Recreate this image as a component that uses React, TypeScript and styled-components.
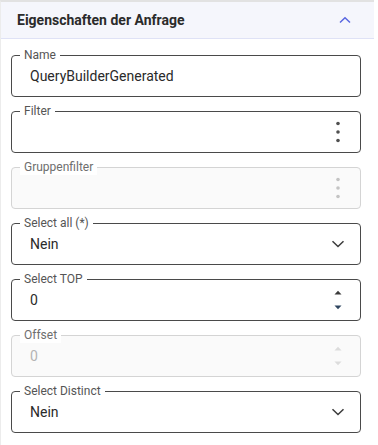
import styled, { createGlobalStyle } from 'styled-components'

const GlobalStyle = createGlobalStyle`
  html, body {
    margin: 0;
    padding: 0;
    background: #fff;
  }
  body {
    font-family: Roboto, "Liberation Sans", sans-serif;
  }
`

interface FieldDef {
  readonly label: string
  readonly value?: string
  readonly kind: 'text' | 'menu' | 'select' | 'number'
  readonly disabled?: boolean
}

const fields: readonly FieldDef[] = [
  { label: 'Name', value: 'QueryBuilderGenerated', kind: 'text' },
  { label: 'Filter', kind: 'menu' },
  { label: 'Gruppenfilter', kind: 'menu', disabled: true },
  { label: 'Select all (*)', value: 'Nein', kind: 'select' },
  { label: 'Select TOP', value: '0', kind: 'number' },
  { label: 'Offset', value: '0', kind: 'number', disabled: true },
  { label: 'Select Distinct', value: 'Nein', kind: 'select' },
]

const ChevronUp = () => (
  <svg width="14" height="8" viewBox="0 0 14 8">
    <path d="M2 6.5 L7 1.8 L12 6.5" fill="none" stroke="#5866e0" strokeWidth="1.5" />
  </svg>
)

const ChevronDown = () => (
  <svg width="14" height="8" viewBox="0 0 14 8">
    <path d="M1.5 1.2 L7 6.5 L12.5 1.2" fill="none" stroke="#3c3c3c" strokeWidth="1.5" />
  </svg>
)

const Kebab = ({ disabled }: { disabled?: boolean }) => (
  <svg width="6" height="22" viewBox="0 0 6 22">
    {[2.5, 11, 19.5].map(cy => (
      <circle key={cy} cx="3" cy={cy} r="1.8" fill={disabled ? '#c4c4c4' : '#505050'} />
    ))}
  </svg>
)

const Spinner = ({ disabled }: { disabled?: boolean }) => {
  const c = disabled ? '#dcdcdc' : '#3a3a3a'
  return (
    <SpinWrap>
      <svg width="8" height="5" viewBox="0 0 8 5">
        <path d="M0.5 4.5 L4 0.8 L7.5 4.5 Z" fill={c} />
      </svg>
      <svg width="8" height="5" viewBox="0 0 8 5">
        <path d="M0.5 0.5 L4 4.2 L7.5 0.5 Z" fill={disabled ? c : '#2f4660'} />
      </svg>
    </SpinWrap>
  )
}

const Field = ({ field }: { field: FieldDef }) => (
  <FieldBox $disabled={field.disabled}>
    <Label $disabled={field.disabled}>{field.label}</Label>
    <Value $disabled={field.disabled}>{field.value ?? ''}</Value>
    <Adornment>
      {field.kind === 'menu' && <Kebab disabled={field.disabled} />}
      {field.kind === 'select' && <ChevronDown />}
      {field.kind === 'number' && <Spinner disabled={field.disabled} />}
    </Adornment>
  </FieldBox>
)

export default function App() {
  return (
    <>
      <GlobalStyle />
      <Panel>
        <Header>
          <Title>Eigenschaften der Anfrage</Title>
          <ChevronUp />
        </Header>
        <Body>
          {fields.map(f => (
            <Field key={f.label} field={f} />
          ))}
        </Body>
      </Panel>
    </>
  )
}

const Panel = styled.section`
  width: 374px;
  height: 445px;
  border-left: 1px solid #ececec;
  border-top: 2px solid #e2e2e2;
  box-sizing: border-box;
  background: #fff;
`

const Header = styled.div`
  height: 37px;
  display: flex;
  align-items: center;
  justify-content: space-between;
  padding: 0 22px 0 16px;
  background: #f5f6fc;
  border-bottom: 1px solid #dfe2f6;
  box-sizing: border-box;
`

const Title = styled.h2`
  margin: 0;
  font-size: 14px;
  font-weight: 700;
  color: #2b2b2b;
`

const Body = styled.div`
  display: flex;
  flex-direction: column;
  gap: 14px;
  padding: 16px 13px 0 10px;
`

const FieldBox = styled.div<{ $disabled?: boolean }>`
  position: relative;
  height: 42px;
  box-sizing: border-box;
  border: 1px solid ${p => (p.$disabled ? '#d4d4d4' : '#4a4a4a')};
  border-radius: 4px;
  background: ${p => (p.$disabled ? '#fafafa' : '#fff')};
  display: flex;
  align-items: center;
  padding: 0 15px 0 18px;
`

const Label = styled.span<{ $disabled?: boolean }>`
  position: absolute;
  top: -9px;
  left: 8px;
  padding: 0 4px;
  font-size: 12px;
  line-height: 16px;
  color: ${p => (p.$disabled ? '#6e6e6e' : '#555')};
  background: #fff;
`

const Value = styled.span<{ $disabled?: boolean }>`
  flex: 1;
  font-size: 14px;
  color: ${p => (p.$disabled ? '#b4b4b4' : '#2a2a2a')};
`

const Adornment = styled.div`
  display: flex;
  align-items: center;
  justify-content: center;
  width: 14px;
`

const SpinWrap = styled.div`
  display: flex;
  flex-direction: column;
  gap: 10px;
  align-items: center;
`
